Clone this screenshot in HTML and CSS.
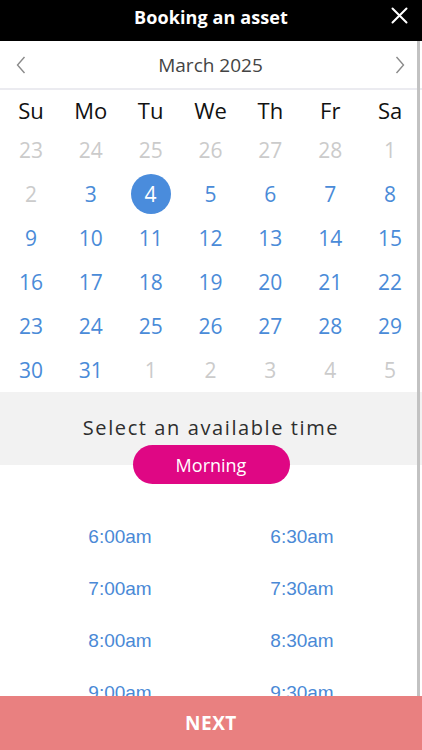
FILE: index.html
```html
<!DOCTYPE html>
<html lang="en">
<head>
<meta charset="utf-8">
<title>Booking an asset</title>
<link rel="stylesheet" href="styles.css">
</head>
<body>
<div class="app">
  <header class="topbar">
    <h1 class="title">Booking an asset</h1>
    <button class="close" aria-label="Close">
      <svg width="17" height="17" viewBox="0 0 17 17"><path d="M1.5 1.5 L15.5 15.5 M15.5 1.5 L1.5 15.5" stroke="#fff" stroke-width="2" fill="none" stroke-linecap="round"/></svg>
    </button>
  </header>
  <main class="content">
    <div class="scrollbar"></div>
    <div class="month-nav">
      <svg class="chev" width="10" height="18" viewBox="0 0 10 18"><path d="M8.5 1 L1.5 9 L8.5 17" stroke="#8a8a8a" stroke-width="1.4" fill="none"/></svg>
      <span class="month">March 2025</span>
      <svg class="chev" width="10" height="18" viewBox="0 0 10 18"><path d="M1.5 1 L8.5 9 L1.5 17" stroke="#8a8a8a" stroke-width="1.4" fill="none"/></svg>
    </div>
    <div class="cal">
      <div class="wd">Su</div><div class="wd">Mo</div><div class="wd">Tu</div><div class="wd">We</div><div class="wd">Th</div><div class="wd">Fr</div><div class="wd">Sa</div>
      <div class="d off">23</div><div class="d off">24</div><div class="d off">25</div><div class="d off">26</div><div class="d off">27</div><div class="d off">28</div><div class="d off">1</div>
      <div class="d off">2</div><div class="d">3</div><div class="d sel"><span>4</span></div><div class="d">5</div><div class="d">6</div><div class="d">7</div><div class="d">8</div>
      <div class="d">9</div><div class="d">10</div><div class="d">11</div><div class="d">12</div><div class="d">13</div><div class="d">14</div><div class="d">15</div>
      <div class="d">16</div><div class="d">17</div><div class="d">18</div><div class="d">19</div><div class="d">20</div><div class="d">21</div><div class="d">22</div>
      <div class="d">23</div><div class="d">24</div><div class="d">25</div><div class="d">26</div><div class="d">27</div><div class="d">28</div><div class="d">29</div>
      <div class="d">30</div><div class="d">31</div><div class="d off">1</div><div class="d off">2</div><div class="d off">3</div><div class="d off">4</div><div class="d off">5</div>
    </div>
    <section class="band">
      <p class="band-title">Select an available time</p>
      <div class="pill">Morning</div>
    </section>
    <div class="times">
      <div class="t">6:00am</div><div class="t">6:30am</div>
      <div class="t">7:00am</div><div class="t">7:30am</div>
      <div class="t">8:00am</div><div class="t">8:30am</div>
      <div class="t">9:00am</div><div class="t">9:30am</div>
    </div>
  </main>
  <footer class="next">NEXT</footer>
</div>
</body>
</html>
```
FILE: styles.css
```css
* { box-sizing: border-box; }
html, body { margin: 0; padding: 0; }
body {
  font-family: "Open Sans", "Noto Sans", sans-serif;
  background: #fff;
  width: 422px;
  height: 750px;
  overflow: hidden;
}
.app {
  display: flex;
  flex-direction: column;
  height: 750px;
}
.topbar {
  height: 41px;
  background: #000;
  display: flex;
  align-items: center;
  justify-content: center;
  position: relative;
  flex: none;
  padding-bottom: 8px;
}
.title {
  margin: 0;
  color: #fff;
  font-size: 18px;
  font-weight: 700;
  letter-spacing: 0.1px;
}
.close {
  position: absolute;
  right: 14px;
  top: 7px;
  background: none;
  border: 0;
  padding: 0;
  width: 17px;
  height: 17px;
  display: flex;
}
.content {
  flex: 1;
  overflow: hidden;
  position: relative;
}
.scrollbar {
  position: absolute;
  left: 417px;
  top: 0;
  width: 3px;
  height: 100%;
  background: #c2c2c2;
  z-index: 2;
}
.month-nav {
  height: 49px;
  display: flex;
  align-items: center;
  justify-content: space-between;
  padding: 0 17px 0 16px;
  border-bottom: 2px solid #ebebf0;
}
.month {
  font-size: 19px;
  color: #444;
}
.cal {
  display: grid;
  grid-template-columns: repeat(7, 1fr);
  width: 420px;
  padding-left: 1px;
}
.wd {
  height: 38px;
  display: flex;
  align-items: center;
  justify-content: center;
  font-size: 22px;
  color: #111;
  padding-top: 2px;
}
.d {
  height: 44px;
  display: flex;
  align-items: center;
  justify-content: center;
  font-size: 21px;
  color: #4a8bd8;
}
.d.off { color: #cbcbcb; }
.d.sel span {
  width: 40px;
  height: 40px;
  border-radius: 50%;
  background: #4a8cdc;
  color: #fff;
  display: flex;
  align-items: center;
  justify-content: center;
}
.band {
  background: #f2f2f2;
  padding-top: 22px;
  height: 73px;
  display: flex;
  flex-direction: column;
  align-items: center;
}
.band-title {
  margin: 0;
  line-height: 28px;
  font-size: 20px;
  letter-spacing: 1.6px;
  color: #2e2e2e;
}
.pill {
  margin-top: 3px;
  width: 157px;
  height: 39px;
  border-radius: 20px;
  background: #df0784;
  color: #fff;
  font-size: 18px;
  display: flex;
  align-items: center;
  justify-content: center;
  position: relative;
  z-index: 1;
  flex: none;
}
.times {
  display: grid;
  grid-template-columns: 182px 182px;
  justify-content: center;
  padding-top: 46px;
}
.t {
  height: 52px;
  display: flex;
  align-items: center;
  justify-content: center;
  font-family: "Liberation Sans", Arial, sans-serif;
  font-size: 19px;
  color: #4a89d6;
}
.next {
  height: 54px;
  flex: none;
  background: #e98080;
  color: #fff;
  font-weight: 700;
  font-size: 19px;
  letter-spacing: 0.5px;
  display: flex;
  align-items: center;
  justify-content: center;
}
```
